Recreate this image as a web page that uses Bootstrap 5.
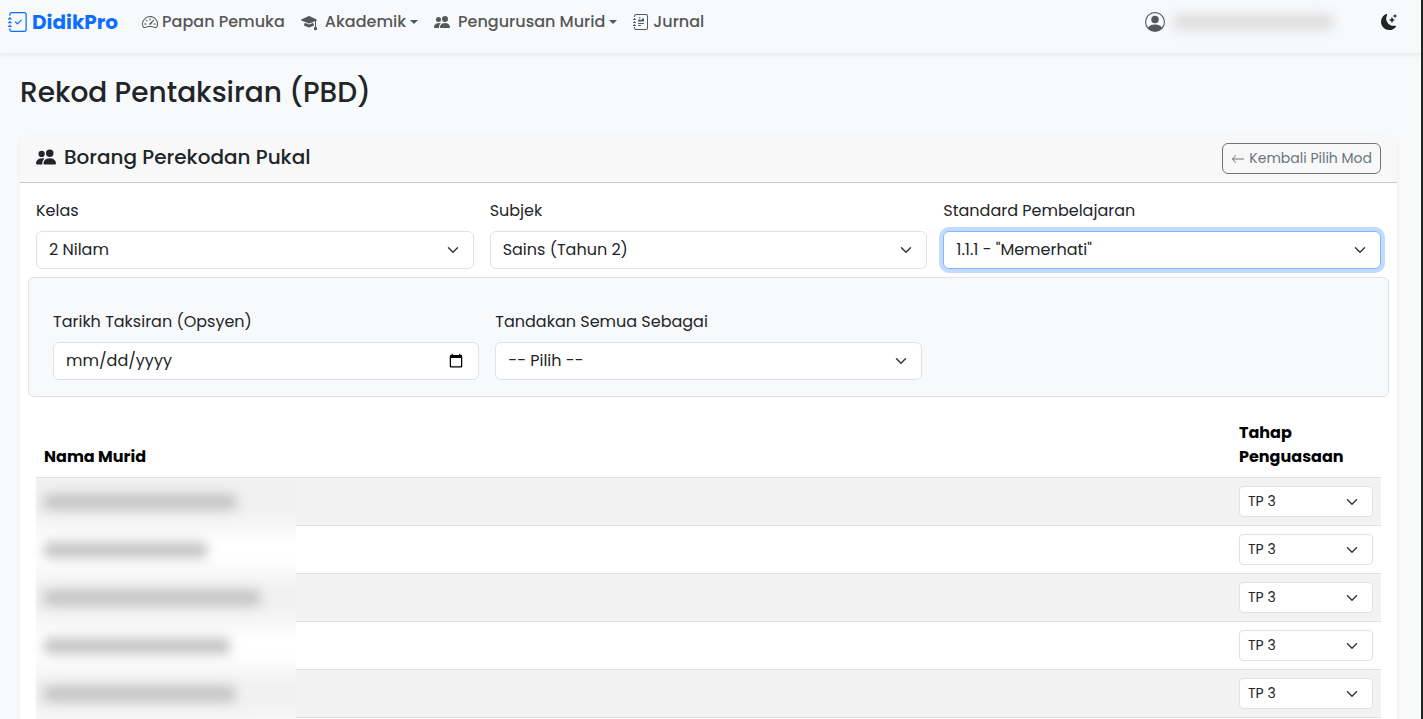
<!DOCTYPE html>
<html lang="ms">
<head>
<meta charset="utf-8">
<meta name="viewport" content="width=device-width, initial-scale=1">
<title>DidikPro - Rekod Pentaksiran (PBD)</title>
<link href="https://cdn.jsdelivr.net/npm/bootstrap@5.3.0/dist/css/bootstrap.min.css" rel="stylesheet">
<style>
body{font-family:Poppins,Inter,"Open Sans",sans-serif;font-size:16px;background:#f8f9fb;color:#212529}
.app-shell{border-right:2px solid #252525}
.icon{width:16px;height:16px;fill:currentColor;flex:none}
.icon-sm{width:14px;height:14px}
.icon-lg{width:20px;height:20px}
.app-nav{height:53px;padding:2px 24px 11px 8px;background:#f8f9fb}
.app-nav .navbar-brand{font-size:20px;font-weight:700;color:#0d6efd;gap:4px;margin-right:24px;padding:0}
.app-nav .nav-link{font-size:16px;font-weight:500;color:#555759;padding:0;white-space:nowrap}
.app-nav .dropdown-toggle::after{margin-left:4px}
.app-main{padding:20px 24px 0 20px}
.page-title{font-size:28px;font-weight:500;line-height:40px;margin-bottom:22px}
.form-card{border:0;border-radius:8px 8px 0 0}
.form-card .card-header{background:#f8f8f8;border-bottom:1px solid #c9c9c9;height:48px;border-radius:8px 8px 0 0}
.card-heading{font-size:20px;font-weight:500;line-height:24px}
.btn-back{font-size:14px;line-height:21px;padding:4px 8px;color:#6c757d;border-color:#6c757d}
.form-label{line-height:24px;margin-bottom:8px}
.form-select,.form-control{background-color:#fff;border-color:#dee2e6}
.form-select.is-current{border-color:#86b7fe;box-shadow:0 0 0 4px #c2dbfe}
.bulk-row{background:#f8f9fb}
.mark-table{--bs-table-striped-bg:#f2f2f2;border-color:#dee2e6}
.mark-table th{color:#000;vertical-align:bottom}
.level-col{width:150px}
.name-cell{position:relative}
.veil{position:absolute;left:0;top:0;width:260px;height:49px;z-index:1;background:linear-gradient(#f7f7f7,#fff 35%,#fff 65%,#f7f7f7)}
tr:nth-child(odd) .veil{background:linear-gradient(#f7f7f7,#f1f1f1 35%,#f1f1f1 65%,#f7f7f7)}
tr:first-child .veil{background:linear-gradient(#f1f1f1 65%,#f7f7f7)}
tr:first-child .veil{top:1px;height:48px}
.smudge{display:block;position:relative;z-index:2;height:16px;border-radius:4px;background:#c3c4c5;filter:blur(6px)}
.user-name{width:160px;background:#dddede}
</style>
</head>
<body>
<svg class="d-none" aria-hidden="true">
<symbol id="journal" viewBox="0 0 16 16"><path d="M3 0h10a2 2 0 0 1 2 2v12a2 2 0 0 1-2 2H3a2 2 0 0 1-2-2v-1h1v1a1 1 0 0 0 1 1h10a1 1 0 0 0 1-1V2a1 1 0 0 0-1-1H3a1 1 0 0 0-1 1v1H1V2a2 2 0 0 1 2-2z"/><path d="M1 5v-.5a.5.5 0 0 1 1 0V5h.5a.5.5 0 0 1 0 1h-2a.5.5 0 0 1 0-1H1zm0 3v-.5a.5.5 0 0 1 1 0V8h.5a.5.5 0 0 1 0 1h-2a.5.5 0 0 1 0-1H1zm0 3v-.5a.5.5 0 0 1 1 0v.5h.5a.5.5 0 0 1 0 1h-2a.5.5 0 0 1 0-1H1z"/></symbol>
<symbol id="people" viewBox="0 0 16 16"><path d="M7 14s-1 0-1-1 1-4 5-4 5 3 5 4-1 1-1 1H7Zm4-6a3 3 0 1 0 0-6 3 3 0 0 0 0 6Zm-5.784 6A2.238 2.238 0 0 1 5 13c0-1.355.68-2.75 1.936-3.72A6.325 6.325 0 0 0 5 9c-4 0-5 3-5 4s1 1 1 1h4.216ZM4.5 8a2.5 2.5 0 1 0 0-5 2.5 2.5 0 0 0 0 5Z"/></symbol>
</svg>
<div class="app-shell min-vh-100 d-flex flex-column">
<nav class="app-nav navbar navbar-expand flex-nowrap shadow-sm">
  <a class="navbar-brand d-flex align-items-center" href="#"><svg class="icon icon-lg" viewBox="0 0 16 16"><use href="#journal"/><path fill-rule="evenodd" d="M10.854 6.146a.5.5 0 0 1 0 .708l-3 3a.5.5 0 0 1-.708 0l-1.5-1.5a.5.5 0 1 1 .708-.708L7.5 8.793l2.646-2.647a.5.5 0 0 1 .708 0z"/></svg>DidikPro</a>
  <ul class="navbar-nav gap-3 me-auto">
    <li class="nav-item"><a class="nav-link px-0 d-flex align-items-center gap-1" href="#"><svg class="icon" viewBox="0 0 16 16"><path d="M8 4a.5.5 0 0 1 .5.5V6a.5.5 0 0 1-1 0V4.500A.5.5 0 0 1 8 4zM3.732 5.732a.5.5 0 0 1 .707 0l.915.914a.5.5 0 1 1-.708.708l-.914-.915a.5.5 0 0 1 0-.707zM2 10a.5.5 0 0 1 .5-.5h1.586a.5.5 0 0 1 0 1H2.500A.5.5 0 0 1 2 10zm9.5 0a.5.5 0 0 1 .5-.5h1.500a.5.5 0 0 1 0 1H12a.5.5 0 0 1-.5-.5zm.754-4.246a.389.389 0 0 0-.527-.02L7.547 9.310a.91.91 0 1 0 1.302 1.258l3.434-4.297a.389.389 0 0 0-.029-.518z"/><path fill-rule="evenodd" d="M0 10a8 8 0 1 1 15.547 2.661c-.442 1.253-1.845 1.602-2.932 1.250C11.309 13.488 9.475 13 8 13c-1.474 0-3.310.488-4.615.911-1.087.352-2.490.003-2.932-1.250A7.988 7.988 0 0 1 0 10zm8-7a7 7 0 0 0-6.603 9.329c.203.575.923.876 1.680.63C4.397 12.533 6.358 12 8 12s3.604.532 4.923.960c.757.245 1.477-.056 1.680-.631A7 7 0 0 0 8 3z"/></svg>Papan Pemuka</a></li>
    <li class="nav-item dropdown"><a class="nav-link px-0 dropdown-toggle d-flex align-items-center" href="#"><svg class="icon me-2" viewBox="0 0 16 16"><path d="M8.211 2.047a.5.5 0 0 0-.422 0l-7.5 3.500a.5.5 0 0 0 .025.917l7.500 3a.5.5 0 0 0 .372 0L14 7.140V13a1 1 0 0 0-1 1v2h3v-2a1 1 0 0 0-1-1V6.739l.686-.275a.5.5 0 0 0 .025-.917l-7.500-3.500Z"/><path d="M4.176 9.032a.5.5 0 0 0-.656.327l-.5 1.700a.5.5 0 0 0 .294.605l4.500 1.800a.5.5 0 0 0 .372 0l4.500-1.800a.5.5 0 0 0 .294-.605l-.5-1.700a.5.5 0 0 0-.656-.327L8 10.466 4.176 9.032Z"/></svg>Akademik</a></li>
    <li class="nav-item dropdown"><a class="nav-link px-0 dropdown-toggle d-flex align-items-center" href="#"><svg class="icon me-2"><use href="#people"/></svg>Pengurusan Murid</a></li>
    <li class="nav-item"><a class="nav-link px-0 d-flex align-items-center gap-1" href="#"><svg class="icon" viewBox="0 0 16 16"><use href="#journal"/><path d="M7.500 3.750a.75.75 0 1 1-1.500 0 .75.75 0 0 1 1.500 0zm-.861 1.542 1.330.886 1.854-1.855a.25.25 0 0 1 .289-.047L11 4.750V7a.5.5 0 0 1-.5.5h-5A.5.5 0 0 1 5 7v-.5s1.540-1.274 1.639-1.208zM5 9.500a.5.5 0 0 1 .5-.5h5a.5.5 0 0 1 0 1h-5a.5.5 0 0 1-.5-.5zm0 2a.5.5 0 0 1 .5-.5h2a.5.5 0 0 1 0 1h-2a.5.5 0 0 1-.5-.5z"/></svg>Jurnal</a></li>
  </ul>
  <a class="nav-link d-flex align-items-center gap-2 me-5" href="#" aria-label="Akaun"><svg class="icon icon-lg" viewBox="0 0 16 16"><path d="M11 6a3 3 0 1 1-6 0 3 3 0 0 1 6 0z"/><path fill-rule="evenodd" d="M0 8a8 8 0 1 1 16 0A8 8 0 0 1 0 8zm8-7a7 7 0 0 0-5.468 11.370C3.242 11.226 4.805 10 8 10s4.757 1.225 5.468 2.370A7 7 0 0 0 8 1z"/></svg><span class="smudge user-name"></span></a>
  <button class="btn border-0 p-0 d-flex" type="button" aria-label="Mod gelap"><svg class="icon" viewBox="0 0 16 16"><path d="M6 .278a.768.768 0 0 1 .08.858 7.208 7.208 0 0 0-.878 3.460c0 4.021 3.278 7.277 7.318 7.277.527 0 1.040-.055 1.533-.16a.787.787 0 0 1 .81.316.733.733 0 0 1-.031.893A8.349 8.349 0 0 1 8.344 16C3.734 16 0 12.286 0 7.710 0 4.266 2.114 1.312 5.124.060A.752.752 0 0 1 6 .278z"/><path d="M10.794 3.148a.217.217 0 0 1 .412 0l.387 1.162c.173.518.579.924 1.097 1.097l1.162.387a.217.217 0 0 1 0 .412l-1.162.387a1.734 1.734 0 0 0-1.097 1.097l-.387 1.162a.217.217 0 0 1-.412 0l-.387-1.162A1.734 1.734 0 0 0 9.310 6.593l-1.162-.387a.217.217 0 0 1 0-.412l1.162-.387a1.734 1.734 0 0 0 1.097-1.097l.387-1.162zM13.863.099a.145.145 0 0 1 .274 0l.258.774c.115.346.386.617.732.732l.774.258a.145.145 0 0 1 0 .274l-.774.258a1.156 1.156 0 0 0-.732.732l-.258.774a.145.145 0 0 1-.274 0l-.258-.774a1.156 1.156 0 0 0-.732-.732l-.774-.258a.145.145 0 0 1 0-.274l.774-.258c.346-.115.617-.386.732-.732L13.863.1z"/></svg></button>
</nav>
<main class="app-main flex-grow-1 d-flex flex-column">
  <h1 class="page-title">Rekod Pentaksiran (PBD)</h1>
  <div class="card form-card shadow-sm flex-grow-1">
    <div class="card-header d-flex align-items-center justify-content-between px-3 py-0">
      <h2 class="card-heading d-flex align-items-center gap-2 mb-0 pb-1"><svg class="icon icon-lg"><use href="#people"/></svg>Borang Perekodan Pukal</h2>
      <button class="btn btn-outline-secondary btn-back d-flex align-items-center gap-1" type="button"><svg class="icon icon-sm" viewBox="0 0 16 16"><path fill-rule="evenodd" d="M15 8a.5.5 0 0 0-.5-.5H2.707l3.147-3.146a.5.5 0 1 0-.708-.708l-4 4a.5.5 0 0 0 0 .708l4 4a.5.5 0 0 0 .708-.708L2.707 8.500H14.500A.5.5 0 0 0 15 8z"/></svg>Kembali Pilih Mod</button>
    </div>
    <div class="card-body p-3 pb-0">
      <div class="row gx-3">
        <div class="col-4"><label class="form-label" for="kelas">Kelas</label><select class="form-select" id="kelas"><option>2 Nilam</option></select></div>
        <div class="col-4"><label class="form-label" for="subjek">Subjek</label><select class="form-select" id="subjek"><option>Sains (Tahun 2)</option></select></div>
        <div class="col-4"><label class="form-label" for="standard">Standard Pembelajaran</label><select class="form-select is-current" id="standard"><option>1.1.1 - "Memerhati"</option></select></div>
      </div>
      <div class="row g-3 bulk-row border rounded p-3 mt-2">
        <div class="col-4"><label class="form-label" for="tarikh">Tarikh Taksiran (Opsyen)</label><input type="date" class="form-control" id="tarikh"></div>
        <div class="col-4"><label class="form-label" for="semua">Tandakan Semua Sebagai</label><select class="form-select" id="semua"><option>-- Pilih --</option></select></div>
      </div>
      <table class="table table-striped mark-table align-middle mt-3 mb-0">
        <thead><tr><th scope="col">Nama Murid</th><th scope="col" class="level-col">Tahap Penguasaan</th></tr></thead>
        <tbody>
          <tr><td class="name-cell"><span class="veil"></span><span class="smudge" style="width:192px"></span></td><td><select class="form-select form-select-sm" aria-label="Tahap murid 1"><option>TP 3</option></select></td></tr>
          <tr><td class="name-cell"><span class="veil"></span><span class="smudge" style="width:163px"></span></td><td><select class="form-select form-select-sm" aria-label="Tahap murid 2"><option>TP 3</option></select></td></tr>
          <tr><td class="name-cell"><span class="veil"></span><span class="smudge" style="width:216px"></span></td><td><select class="form-select form-select-sm" aria-label="Tahap murid 3"><option>TP 3</option></select></td></tr>
          <tr><td class="name-cell"><span class="veil"></span><span class="smudge" style="width:186px"></span></td><td><select class="form-select form-select-sm" aria-label="Tahap murid 4"><option>TP 3</option></select></td></tr>
          <tr><td class="name-cell"><span class="veil"></span><span class="smudge" style="width:191px"></span></td><td><select class="form-select form-select-sm" aria-label="Tahap murid 5"><option>TP 3</option></select></td></tr>
        </tbody>
      </table>
    </div>
  </div>
</main>
</div>
<script src="https://cdn.jsdelivr.net/npm/bootstrap@5.3.0/dist/js/bootstrap.bundle.min.js"></script>
</body>
</html>
